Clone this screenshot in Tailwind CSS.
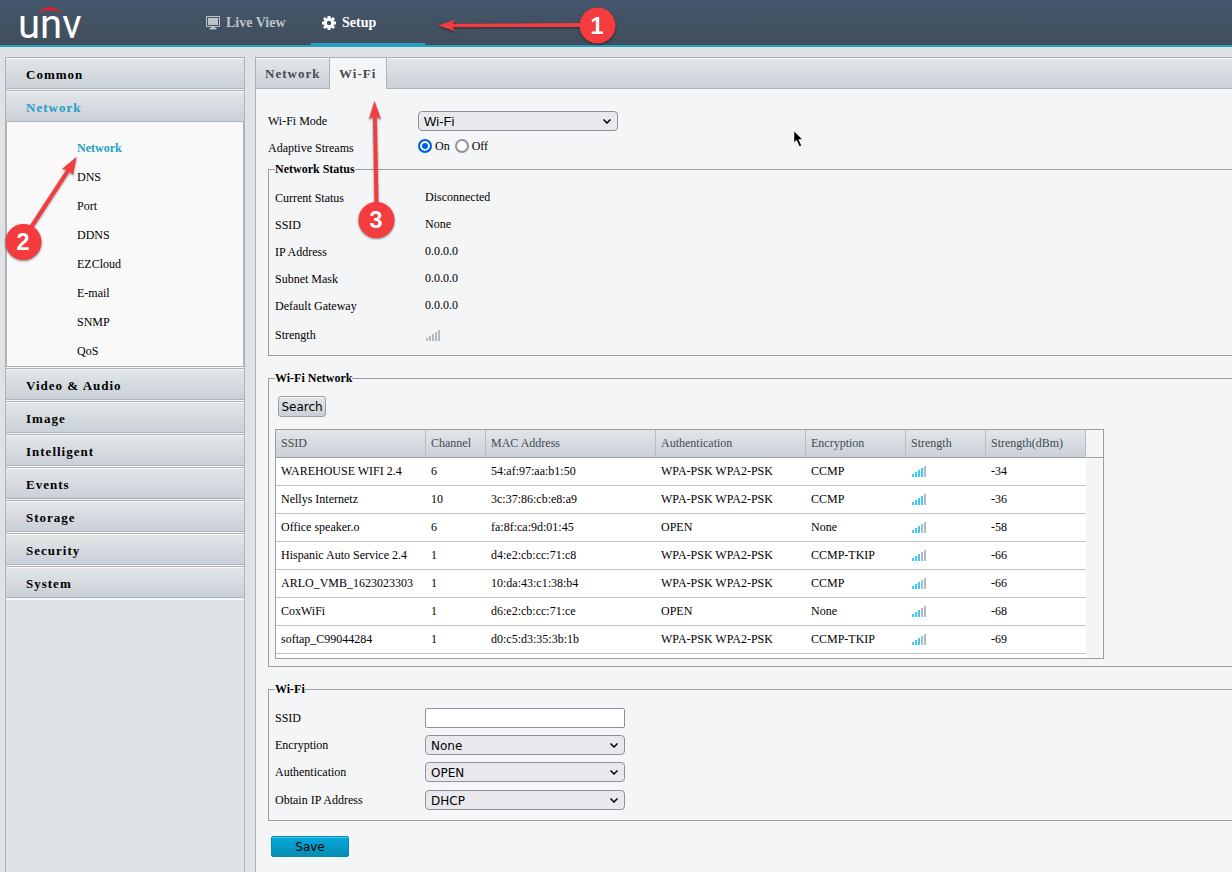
<!DOCTYPE html>
<html lang="en">
  <head>
    <meta charset="utf-8" />
    <meta name="viewport" content="width=device-width, initial-scale=1" />
    <title>Setup - Wi-Fi</title>
    <script src="https://cdn.jsdelivr.net/npm/@tailwindcss/browser@4"></script>
  </head>
  <body class="relative flex min-h-screen flex-col overflow-x-hidden bg-[#dfe3e6] font-['Liberation_Serif',serif] text-xs text-black">
    <!-- Top bar -->
    <header class="flex h-[47px] border-b-2 border-[#22a0c8] bg-linear-to-b from-[#43566c] to-[#414e5b]">
      <a href="#" class="relative block w-[195px] pt-[5px] pl-[18px] font-['Roboto',sans-serif] text-[40px] leading-[40px] text-white">
        unv
        <svg class="absolute top-[7px] left-[37px]" width="26" height="7" viewBox="0 0 26 7">
          <path d="M0 6.5Q13 -6.5 26 6.5Q13 0 0 6.5Z" fill="#e02128" />
        </svg>
      </a>
      <nav class="flex gap-[2px] text-sm font-bold">
        <a href="#" class="flex h-[47px] w-[114px] items-center gap-[6px] border-b-4 border-transparent pt-[2px] pl-[11px] text-[#bcc3ca]">
          <svg width="14" height="14" viewBox="0 0 14 14">
            <path d="M.5 .5h13v10h-13z" fill="none" stroke="currentColor" />
            <path d="M2 2h10v7H2zM5 11h4v1h1.500v1.500h-7V12H5z" fill="currentColor" />
          </svg>
          Live View
        </a>
        <a href="#" class="flex h-[47px] w-[114px] items-center gap-[6px] border-b-4 border-[#22a0c8] pt-[2px] pl-[11px] text-white">
          <svg width="14" height="14" viewBox="0 0 14 14">
            <g stroke="currentColor" stroke-width="3">
              <path d="M7 0v3.500M7 10.500V14M0 7h3.500M10.500 7H14M2 2l2.500 2.500M9.500 9.500L12 12M12 2L9.500 4.500M4.500 9.500L2 12" />
            </g>
            <circle cx="7" cy="7" r="3.700" fill="none" stroke="currentColor" stroke-width="3" />
          </svg>
          Setup
        </a>
      </nav>
    </header>

    <div class="flex flex-1 pt-[10px]">
      <!-- Side menu -->
      <aside class="ml-[5px] w-[240px] shrink-0 border-x border-[#b0b3b6] text-[13px] font-bold">
        <a href="#" class="mb-px flex h-8 items-center border-y border-[#b0b3b6] bg-linear-to-b from-[#e3e7e9] to-[#c9d0d7] pt-1 pl-5 tracking-[1px] shadow-[inset_0_1px_0_#f4f6f7,0_1px_0_#f4f6f7]">Common</a>
        <a href="#" class="flex h-8 items-center border-y border-[#b0b3b6] bg-linear-to-b from-[#e3e7e9] to-[#c9d0d7] pt-1 pl-5 tracking-[1px] text-[#22a0c8] shadow-[inset_0_1px_0_#f4f6f7]">Network</a>
        <nav class="mb-px flex flex-col border-x border-b border-[#b0b3b6] bg-[#f9f9f9] pt-3 pl-[70px] text-xs leading-[29px] font-normal shadow-[0_1px_0_#f4f6f7]">
          <a href="#" class="font-bold text-[#22a0c8]">Network</a>
          <a href="#">DNS</a>
          <a href="#">Port</a>
          <a href="#">DDNS</a>
          <a href="#">EZCloud</a>
          <a href="#">E-mail</a>
          <a href="#">SNMP</a>
          <a href="#">QoS</a>
        </nav>
        <a href="#" class="mb-px flex h-8 items-center border-y border-[#b0b3b6] bg-linear-to-b from-[#e3e7e9] to-[#c9d0d7] pt-1 pl-5 tracking-[1px] shadow-[inset_0_1px_0_#f4f6f7,0_1px_0_#f4f6f7]">Video &amp; Audio</a>
        <a href="#" class="mb-px flex h-8 items-center border-y border-[#b0b3b6] bg-linear-to-b from-[#e3e7e9] to-[#c9d0d7] pt-1 pl-5 tracking-[1px] shadow-[inset_0_1px_0_#f4f6f7,0_1px_0_#f4f6f7]">Image</a>
        <a href="#" class="mb-px flex h-8 items-center border-y border-[#b0b3b6] bg-linear-to-b from-[#e3e7e9] to-[#c9d0d7] pt-1 pl-5 tracking-[1px] shadow-[inset_0_1px_0_#f4f6f7,0_1px_0_#f4f6f7]">Intelligent</a>
        <a href="#" class="mb-px flex h-8 items-center border-y border-[#b0b3b6] bg-linear-to-b from-[#e3e7e9] to-[#c9d0d7] pt-1 pl-5 tracking-[1px] shadow-[inset_0_1px_0_#f4f6f7,0_1px_0_#f4f6f7]">Events</a>
        <a href="#" class="mb-px flex h-8 items-center border-y border-[#b0b3b6] bg-linear-to-b from-[#e3e7e9] to-[#c9d0d7] pt-1 pl-5 tracking-[1px] shadow-[inset_0_1px_0_#f4f6f7,0_1px_0_#f4f6f7]">Storage</a>
        <a href="#" class="mb-px flex h-8 items-center border-y border-[#b0b3b6] bg-linear-to-b from-[#e3e7e9] to-[#c9d0d7] pt-1 pl-5 tracking-[1px] shadow-[inset_0_1px_0_#f4f6f7,0_1px_0_#f4f6f7]">Security</a>
        <a href="#" class="flex h-8 items-center border-y border-[#b0b3b6] bg-linear-to-b from-[#e3e7e9] to-[#c9d0d7] pt-1 pl-5 tracking-[1px] shadow-[inset_0_1px_0_#f4f6f7,0_2px_0_#f4f6f7]">System</a>
      </aside>

      <main class="ml-[10px] min-w-0 flex-1 border-t border-l border-[#b0b3b6] bg-[#f4f5f7]">
        <!-- Tabs -->
        <nav class="flex h-[31px] border-b border-[#b0b3b6] bg-linear-to-b from-[#e3e7e9] to-[#c9d0d7] text-[13px] font-bold tracking-[1px] text-[#444b50] shadow-[inset_0_1px_0_#f4f6f7]">
          <a href="#" class="flex h-[31px] w-[73px] items-center pl-[9px]">Network</a>
          <a href="#" class="flex h-[31px] w-[58px] items-center border-x border-[#b0b3b6] bg-[#f4f5f7] pl-[9px]">Wi-Fi</a>
        </nav>

        <form class="pt-[18px] pl-3">
          <div class="flex h-7 items-center">
            <label for="mode" class="w-[150px]">Wi-Fi Mode</label>
            <div class="relative">
              <select id="mode" class="block h-5 w-[200px] appearance-none rounded-[4px] border border-[#8f8f9d] bg-[#e9e9ed] pt-px pl-[5px] font-['Liberation_Sans',sans-serif] text-[13px] leading-[18px]">
                <option>Wi-Fi</option>
              </select>
              <svg class="pointer-events-none absolute top-2 right-[7px]" width="8" height="5" viewBox="0 0 8 5"><path d="M.5 .5L4 4L7.500 .5" fill="none" stroke="#000" stroke-width="1.500" /></svg>
            </div>
          </div>
          <div class="flex h-[26px] items-center">
            <span id="adaptive" class="w-[150px]">Adaptive Streams</span>
            <div role="radiogroup" aria-labelledby="adaptive" class="flex h-[22px] items-center self-start">
              <input type="radio" id="on" name="adaptive" checked class="size-[14px] appearance-none rounded-full border-2 border-[#8f8f9d] bg-white checked:border-[#0061e0] checked:bg-[#0061e0] checked:shadow-[inset_0_0_0_2px_#fff]" />
              <label for="on" class="mr-[5px] ml-[3px]">On</label>
              <input type="radio" id="off" name="adaptive" class="size-[14px] appearance-none rounded-full border-2 border-[#8f8f9d] bg-white checked:border-[#0061e0] checked:bg-[#0061e0] checked:shadow-[inset_0_0_0_2px_#fff]" />
              <label for="off" class="ml-[3px]">Off</label>
            </div>
          </div>

          <fieldset class="border border-r-0 border-[#9b9ea2] pt-2 pb-[5px] pl-[6px]">
            <legend class="leading-4 font-bold">Network Status</legend>
            <dl class="grid grid-cols-[150px_1fr] leading-[27px]">
              <dt>Current Status</dt>
              <dd class="leading-[25px]">Disconnected</dd>
              <dt>SSID</dt>
              <dd class="leading-[25px]">None</dd>
              <dt>IP Address</dt>
              <dd class="leading-[25px]">0.0.0.0</dd>
              <dt>Subnet Mask</dt>
              <dd class="leading-[25px]">0.0.0.0</dd>
              <dt>Default Gateway</dt>
              <dd class="leading-[25px]">0.0.0.0</dd>
              <dt class="leading-[30px]">Strength</dt>
              <dd class="flex items-center pl-px" data-signal="0"></dd>
            </dl>
          </fieldset>

          <fieldset class="mt-[14px] border border-r-0 border-[#9b9ea2] pt-[10px] pb-[7px] pl-[6px]">
            <legend class="leading-4 font-bold">Wi-Fi Network</legend>
            <button type="button" class="ml-[3px] block h-[21px] w-12 rounded-[3px] border border-[#9a9fa5] bg-linear-to-b from-[#e3e7e9] to-[#c9d0d7] pt-px font-['DejaVu_Sans',sans-serif] leading-[19px] shadow-[inset_0_1px_0_#f4f6f7]">Search</button>
            <div class="mt-3 h-[230px] w-[829px] overflow-hidden border border-[#9b9ea2]">
              <table class="w-full table-fixed border-separate border-spacing-0 text-left">
                <colgroup>
                  <col class="w-[150px]" />
                  <col class="w-[60px]" />
                  <col class="w-[170px]" />
                  <col class="w-[150px]" />
                  <col class="w-[100px]" />
                  <col class="w-[80px]" />
                  <col class="w-[100px]" />
                  <col />
                </colgroup>
                <thead>
                  <tr class="h-7 text-[#444b50]">
                    <th class="border-r border-b border-r-[#b9bcbf] border-b-[#9b9ea2] bg-linear-to-b from-[#e3e7e9] to-[#c9d0d7] pb-[2px] pl-[5px] font-normal">SSID</th>
                    <th class="border-r border-b border-r-[#b9bcbf] border-b-[#9b9ea2] bg-linear-to-b from-[#e3e7e9] to-[#c9d0d7] pb-[2px] pl-[5px] font-normal">Channel</th>
                    <th class="border-r border-b border-r-[#b9bcbf] border-b-[#9b9ea2] bg-linear-to-b from-[#e3e7e9] to-[#c9d0d7] pb-[2px] pl-[5px] font-normal">MAC Address</th>
                    <th class="border-r border-b border-r-[#b9bcbf] border-b-[#9b9ea2] bg-linear-to-b from-[#e3e7e9] to-[#c9d0d7] pb-[2px] pl-[5px] font-normal">Authentication</th>
                    <th class="border-r border-b border-r-[#b9bcbf] border-b-[#9b9ea2] bg-linear-to-b from-[#e3e7e9] to-[#c9d0d7] pb-[2px] pl-[5px] font-normal">Encryption</th>
                    <th class="border-r border-b border-r-[#b9bcbf] border-b-[#9b9ea2] bg-linear-to-b from-[#e3e7e9] to-[#c9d0d7] pb-[2px] pl-[5px] font-normal">Strength</th>
                    <th class="border-r border-b border-r-[#b9bcbf] border-b-[#9b9ea2] bg-linear-to-b from-[#e3e7e9] to-[#c9d0d7] pb-[2px] pl-[5px] font-normal">Strength(dBm)</th>
                    <td class="border-b border-b-[#9b9ea2]"></td>
                  </tr>
                </thead>
                <tbody id="networks"></tbody>
              </table>
            </div>
          </fieldset>

          <fieldset class="mt-[14px] border border-r-0 border-[#9b9ea2] pt-[7px] pb-[5px] pl-[6px]">
            <legend class="leading-4 font-bold">Wi-Fi</legend>
            <div class="flex h-[27px] items-center">
              <label for="ssid" class="w-[150px]">SSID</label>
              <input id="ssid" type="text" class="h-5 w-[200px] rounded-[2px] border border-[#8f8f9d] bg-white px-1" />
            </div>
            <div class="flex h-[27px] items-center">
              <label for="encryption" class="w-[150px]">Encryption</label>
              <div class="relative">
                <select id="encryption" class="block h-5 w-[200px] appearance-none rounded-[4px] border border-[#8f8f9d] bg-[#e9e9ed] pt-px pl-[5px] font-['DejaVu_Sans',sans-serif] text-xs leading-[18px]">
                  <option>None</option>
                </select>
                <svg class="pointer-events-none absolute top-2 right-[7px]" width="8" height="5" viewBox="0 0 8 5"><path d="M.5 .5L4 4L7.500 .5" fill="none" stroke="#000" stroke-width="1.500" /></svg>
              </div>
            </div>
            <div class="flex h-[27px] items-center">
              <label for="auth" class="w-[150px]">Authentication</label>
              <div class="relative">
                <select id="auth" class="block h-5 w-[200px] appearance-none rounded-[4px] border border-[#8f8f9d] bg-[#e9e9ed] pt-px pl-[5px] font-['DejaVu_Sans',sans-serif] text-xs leading-[18px]">
                  <option>OPEN</option>
                </select>
                <svg class="pointer-events-none absolute top-2 right-[7px]" width="8" height="5" viewBox="0 0 8 5"><path d="M.5 .5L4 4L7.500 .5" fill="none" stroke="#000" stroke-width="1.500" /></svg>
              </div>
            </div>
            <div class="flex h-[30px] items-center">
              <label for="obtain" class="w-[150px]">Obtain IP Address</label>
              <div class="relative">
                <select id="obtain" class="block h-5 w-[200px] appearance-none rounded-[4px] border border-[#8f8f9d] bg-[#e9e9ed] pt-px pl-[5px] font-['DejaVu_Sans',sans-serif] text-xs leading-[18px]">
                  <option>DHCP</option>
                </select>
                <svg class="pointer-events-none absolute top-2 right-[7px]" width="8" height="5" viewBox="0 0 8 5"><path d="M.5 .5L4 4L7.500 .5" fill="none" stroke="#000" stroke-width="1.500" /></svg>
              </div>
            </div>
          </fieldset>

          <button type="button" class="mt-[15px] ml-[3px] block h-[21px] w-[78px] rounded-[2px] border border-[#0589b0] bg-linear-to-b from-[#04a9da] to-[#058db5] pt-px font-['DejaVu_Sans',sans-serif] leading-[19px] shadow-[inset_0_1px_0_#4cc4e6]">Save</button>
        </form>
      </main>
    </div>

    <!-- Step markers over the page -->
    <svg class="pointer-events-none absolute top-0 left-0 drop-shadow-[0_1px_1px_rgba(0,0,0,0.5)]" width="660" height="270" viewBox="0 0 660 270">
      <g fill="#f43b3d">
        <path d="M438 25.500L456 19.500L452.500 23.800L582 23V27L452.500 27.200L456 31.500Z" />
        <path d="M76.500 157L73 175L69.800 171.500L33 228L29.500 226L66.500 169.500L62 169Z" />
        <path d="M374.500 101L381 119.500L376.800 116.500L378.500 204H374.500L373 116.500L369 119.500Z" />
        <circle cx="597.500" cy="25.500" r="18" />
        <circle cx="23.500" cy="242" r="18" />
        <circle cx="376.500" cy="220" r="18" />
      </g>
      <g fill="#fff" text-anchor="middle" class="font-['Liberation_Sans',sans-serif] text-2xl font-bold">
        <text x="597" y="34">1</text>
        <text x="23" y="250">2</text>
        <text x="376" y="228">3</text>
      </g>
    </svg>
    <!-- Mouse pointer -->
    <svg class="pointer-events-none absolute top-[130px] left-[793px]" width="11" height="18" viewBox="0 0 11 18">
      <path d="M1 1V12.500L3.500 10.200L6.500 16.500L8.500 15.700L5.800 9.500H9.500Z" fill="#000" stroke="#fff" stroke-width=".5" />
    </svg>

    <script>
      const networks = [
        ['WAREHOUSE WIFI 2.4', 6, '54:af:97:aa:b1:50', 'WPA-PSK WPA2-PSK', 'CCMP', 4, -34],
        ['Nellys Internetz', 10, '3c:37:86:cb:e8:a9', 'WPA-PSK WPA2-PSK', 'CCMP', 4, -36],
        ['Office speaker.o', 6, 'fa:8f:ca:9d:01:45', 'OPEN', 'None', 3, -58],
        ['Hispanic Auto Service 2.4', 1, 'd4:e2:cb:cc:71:c8', 'WPA-PSK WPA2-PSK', 'CCMP-TKIP', 3, -66],
        ['ARLO_VMB_1623023303', 1, '10:da:43:c1:38:b4', 'WPA-PSK WPA2-PSK', 'CCMP', 3, -66],
        ['CoxWiFi', 1, 'd6:e2:cb:cc:71:ce', 'OPEN', 'None', 3, -68],
        ['softap_C99044284', 1, 'd0:c5:d3:35:3b:1b', 'WPA-PSK WPA2-PSK', 'CCMP-TKIP', 3, -69],
      ];

      // Five bars, the first `level` of them lit
      function signal(level) {
        const heights = [3, 5, 7, 9, 11];
        const bars = heights
          .map((h, i) => `<rect x="${i * 3}" y="${11 - h}" width="2" height="${h}" fill="${i < level ? '#38ccff' : '#b2bac1'}" />`)
          .join('');
        return `<svg width="14" height="11" viewBox="0 0 14 11" shape-rendering="crispEdges">${bars}</svg>`;
      }

      document.querySelectorAll('[data-signal]').forEach(el => {
        el.innerHTML = signal(Number(el.dataset.signal));
      });

      document.getElementById('networks').innerHTML = networks
        .map(row => {
          const cells = row
            .map((value, i) => `<td class="border-b border-[#c0c3c6] bg-white pb-[2px] pl-[5px]">${i === 5 ? `<div class="pt-[2px] pl-px">${signal(value)}</div>` : value}</td>`)
            .join('');
          return `<tr class="h-7">${cells}<td></td></tr>`;
        })
        .join('') + '<tr class="h-7"><td colspan="7" class="bg-white"></td><td></td></tr>';
    </script>
  </body>
</html>
